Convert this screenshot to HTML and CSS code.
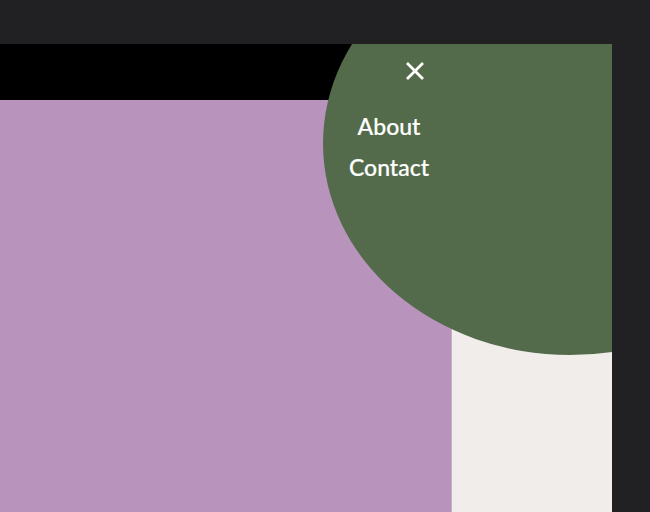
FILE: index.html
```html
<!DOCTYPE html>
<html lang="en">
<head>
<meta charset="utf-8">
<title>Menu</title>
<link rel="stylesheet" href="styles.css">
</head>
<body>
<div class="frame">
  <header class="topbar"></header>
  <main class="content">
    <section class="panel-main"></section>
    <aside class="panel-side"></aside>
  </main>
  <nav class="menu">
    <button class="close" aria-label="Close menu">
      <svg width="20" height="20" viewBox="0 0 20 20"><path d="M2 2 L18 18 M18 2 L2 18" stroke="#fff" stroke-width="2.8" fill="none"/></svg>
    </button>
    <ul class="menu-list">
      <li><a href="#">About</a></li>
      <li><a href="#">Contact</a></li>
    </ul>
  </nav>
</div>
</body>
</html>
```
FILE: styles.css
```css
html, body {
  margin: 0;
  padding: 0;
  height: 100%;
  background: #212123;
}
body {
  font-family: Lato, "Open Sans", sans-serif;
  overflow: hidden;
}
.frame {
  position: relative;
  margin-top: 44px;
  width: 612px;
  height: 468px;
  overflow: hidden;
  display: flex;
  flex-direction: column;
}
.topbar {
  height: 56px;
  background: #000;
  flex: none;
}
.content {
  flex: 1;
  display: flex;
}
.panel-main {
  width: 451px;
  background: #b894bd;
  border-right: 1px solid #c9afcb;
}
.panel-side {
  flex: 1;
  background: #f0edea;
}
.menu {
  position: absolute;
  left: 323px;
  top: -112px;
  width: 494px;
  height: 423px;
  border-radius: 50%;
  background: #546b4b;
}
.close {
  position: absolute;
  left: 82px;
  top: 129px;
  width: 20px;
  height: 20px;
  padding: 0;
  border: 0;
  background: none;
  display: block;
}
.close svg { display: block; }
.menu-list {
  list-style: none;
  margin: 0;
  padding: 0;
  position: absolute;
  left: 0;
  width: 132px;
  top: 175px;
  text-align: center;
}
.menu-list li {
  line-height: 39px;
}
.menu-list a {
  color: #fff;
  text-decoration: none;
  font-size: 23px;
  font-weight: 500;
  -webkit-text-stroke: 0.2px #fff;
}
```
